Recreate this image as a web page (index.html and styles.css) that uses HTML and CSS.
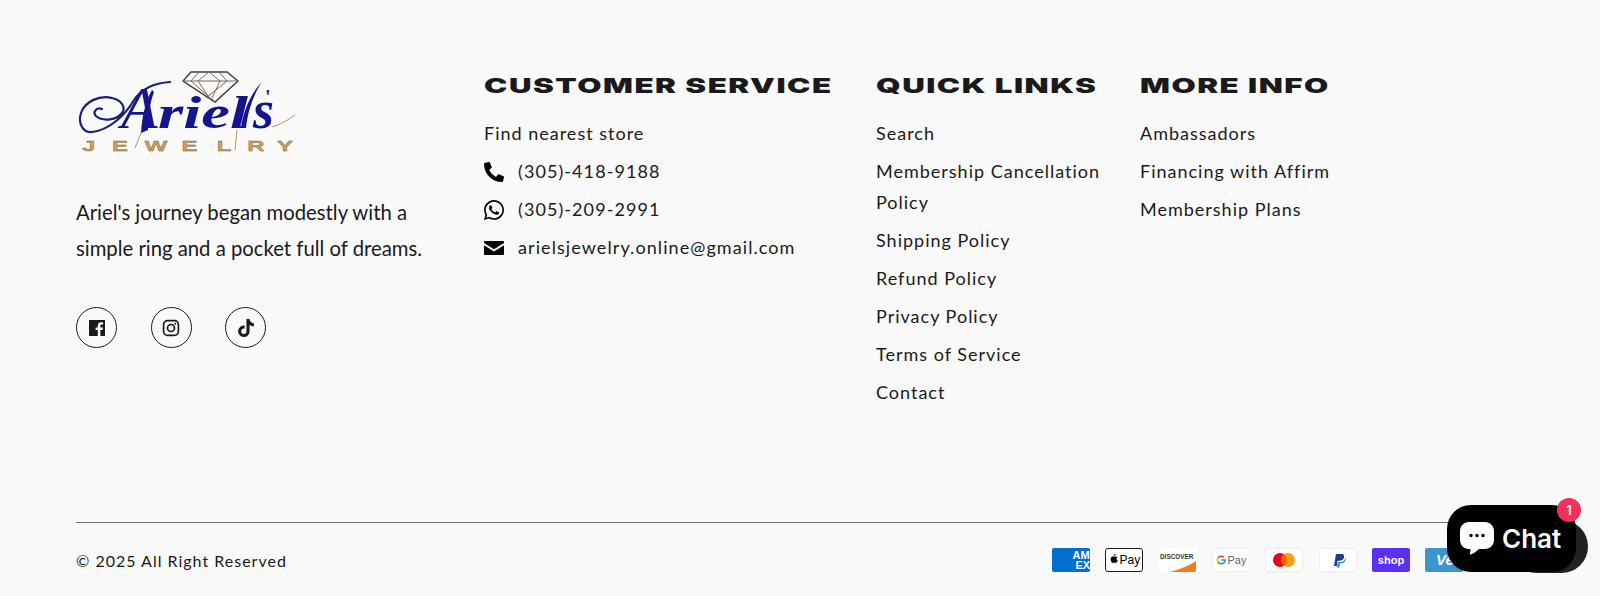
FILE: index.html
```html
<!DOCTYPE html>
<html lang="en">
  <head>
    <meta charset="UTF-8" />
    <meta name="viewport" content="width=device-width, initial-scale=1.0" />
    <title>Ariel's Jewelry Footer</title>
    <link rel="stylesheet" href="styles.css">
  </head>
  <body>
    <footer class="footer">
      <div class="footer-top">
        <div class="col-brand">
          <svg class="logo" width="220" height="90" viewBox="0 0 220 90" role="img" aria-label="Ariel's Jewelry">
            <!-- diamond -->
            <g fill="none" stroke="#3e3a44" stroke-width="1.4">
              <path d="M115 4H151L162 13L139 34L107 13Z"/>
              <path d="M107 13H162M123 4L115 13L139 34M143 4L151 13L130 30M133 4L122 13L134 31M133 4L144 13L136 30" stroke="#7d6a52" stroke-width="1"/>
            </g>
            <!-- swash of the A -->
            <path fill="none" stroke="#1c1f7a" stroke-width="2.2" stroke-linecap="round" d="M94 14C78 15 66 20 58 32C50 46 34 62 16 64C6 65 2 54 5 45C9 33 24 27 36 30C46 32 50 40 46 45C41 52 27 54 20 48C16 44 21 39 26 41"/>
            <path fill="#14148c" d="M76 22C70 32 66 48 65 65L72 62C72 48 74 34 78 24Z"/>
            <path fill="#14148c" d="M186 14C180 22 172 40 170 60L165 60C167 42 176 24 186 14Z"/>
            <g fill="none" stroke="#b9935e" stroke-width="1">
              <path d="M65 65L59 80"/>
              <path d="M161 62L159 82"/>
              <path d="M196 59C204 57 212 52 219 47"/>
            </g>
            <text class="logo-a" x="45" y="60">A</text>
            <text class="logo-script" x="82" y="60" textLength="90" lengthAdjust="spacingAndGlyphs">riel</text>
            <text class="logo-script"><tspan class="logo-apos" x="189" y="36">'</tspan><tspan class="logo-s" x="177" y="60">s</tspan></text>
            <text class="logo-sub" transform="scale(1.6 1)" x="3.750 22.500 43 66 88 107 125.600" y="83">JEWELRY</text>
          </svg>
          <p class="about">Ariel's journey began modestly with a<br>simple ring and a pocket full of dreams.</p>
          <ul class="socials">
            <li class="social">
              <svg width="18" height="18" viewBox="0 0 18 18"><path fill="#1a1a1a" d="M1 1H17V17H12.4V10.9H14.6L15 8.4H12.4V6.9C12.4 6.1 12.8 5.6 13.8 5.6H15.1V3.4C14.6 3.3 13.9 3.2 13.1 3.2C11.1 3.2 9.8 4.4 9.8 6.6V8.4H7.6V10.9H9.8V17H1Z"/></svg>
            </li>
            <li class="social">
              <svg width="18" height="18" viewBox="0 0 18 18" fill="none" stroke="#1a1a1a"><rect x="1.6" y="1.6" width="14.8" height="14.8" rx="4" stroke-width="1.7"/><circle cx="9" cy="9" r="3.5" stroke-width="1.7"/><circle cx="13.3" cy="4.7" r="1" fill="#1a1a1a" stroke="none"/></svg>
            </li>
            <li class="social">
              <svg width="18" height="18" viewBox="0 0 448 512"><path fill="#1a1a1a" d="M448 209.91a210.06 210.06 0 0 1-122.77-39.25V349.38A162.55 162.55 0 1 1 185 188.31V278.2a74.62 74.62 0 1 0 52.23 71.18V0l88 0a121.18 121.18 0 0 0 1.86 22.17h0A122.18 122.18 0 0 0 381 102.39a121.43 121.43 0 0 0 67 20.14Z"/></svg>
            </li>
          </ul>
        </div>

        <div class="col col-service">
          <h2 class="col-title">Customer Service</h2>
          <ul class="links">
            <li>Find nearest store</li>
            <li class="contact">
              <svg width="20" height="20" viewBox="0 0 512 512"><path d="M497.39 361.8l-112-48a24 24 0 0 0-28 6.9l-49.6 60.6A370.66 370.66 0 0 1 130.6 204.11l60.6-49.6a23.94 23.94 0 0 0 6.9-28l-48-112A24.16 24.16 0 0 0 122.6.61l-104 24A24 24 0 0 0 0 48c0 256.5 207.9 464 464 464a24 24 0 0 0 23.4-18.6l24-104a24.29 24.29 0 0 0-14.01-27.6z"/></svg>
              (305)-418-9188
            </li>
            <li class="contact">
              <svg width="20" height="20" viewBox="0 32 448 448"><path d="M380.9 97.1C339 55.1 283.2 32 223.9 32c-122.4 0-222 99.6-222 222 0 39.1 10.2 77.3 29.6 111L0 480l117.7-30.9c32.4 17.7 68.9 27 106.1 27h.1c122.3 0 224.1-99.6 224.1-222 0-59.3-25.2-115-67.1-157zm-157 341.6c-33.2 0-65.7-8.9-94-25.7l-6.7-4-69.8 18.3L72 359.2l-4.4-7c-18.5-29.4-28.2-63.3-28.2-98.2 0-101.7 82.8-184.5 184.6-184.5 49.3 0 95.6 19.2 130.4 54.1 34.8 34.9 56.2 81.2 56.1 130.5 0 101.8-84.9 184.6-186.6 184.6zm101.2-138.2c-5.5-2.8-32.8-16.2-37.9-18-5.1-1.9-8.8-2.8-12.5 2.8-3.7 5.6-14.3 18-17.6 21.8-3.2 3.7-6.5 4.2-12 1.4-32.6-16.3-54-29.1-75.5-66-5.7-9.8 5.7-9.1 16.3-30.3 1.8-3.7.9-6.9-.5-9.7-1.4-2.8-12.5-30.1-17.1-41.2-4.5-10.8-9.1-9.3-12.5-9.5-3.2-.2-6.9-.2-10.6-.2-3.7 0-9.7 1.4-14.8 6.9-5.1 5.6-19.4 19-19.4 46.3 0 27.3 19.9 53.7 22.6 57.4 2.8 3.7 39.1 59.7 94.8 83.8 35.2 15.2 49 16.5 66.6 13.9 10.7-1.6 32.8-13.4 37.4-26.4 4.6-13 4.6-24.1 3.2-26.4-1.3-2.5-5-3.9-10.5-6.6z"/></svg>
              (305)-209-2991
            </li>
            <li class="contact">
              <svg width="20" height="20" viewBox="0 0 20 20"><path d="M1 3H19C19.6 3 20 3.4 20 4V5L10 11.2L0 5V4C0 3.4 .4 3 1 3ZM0 7.2L10 13.4L20 7.2V16C20 16.6 19.6 17 19 17H1C.4 17 0 16.6 0 16Z"/></svg>
              arielsjewelry.online@gmail.com
            </li>
          </ul>
        </div>

        <div class="col col-quick">
          <h2 class="col-title">Quick Links</h2>
          <ul class="links">
            <li>Search</li>
            <li>Membership Cancellation Policy</li>
            <li>Shipping Policy</li>
            <li>Refund Policy</li>
            <li>Privacy Policy</li>
            <li>Terms of Service</li>
            <li>Contact</li>
          </ul>
        </div>

        <div class="col">
          <h2 class="col-title">More Info</h2>
          <ul class="links">
            <li>Ambassadors</li>
            <li>Financing with Affirm</li>
            <li>Membership Plans</li>
          </ul>
        </div>
      </div>

      <div class="footer-bottom">
        <span class="copyright">© 2025 All Right Reserved</span>
        <ul class="payments">
          <li>
            <svg class="pay" viewBox="0 0 38 24"><rect width="38" height="24" rx="2" fill="#016fd0"/><text class="pay-amex" x="20.500" y="11">AM</text><text class="pay-amex" x="23.500" y="20.500">EX</text></svg>
          </li>
          <li>
            <svg class="pay" viewBox="0 0 38 24"><rect x=".5" y=".5" width="37" height="23" rx="2.5" fill="#fff" stroke="#1a1a1a"/><path fill="#000" d="M9 8.7c.6 0 1.1-.3 1.7-.3.7 0 1.3.3 1.7.9-1.3.8-1.1 2.7.3 3.2-.3 1-1 2.4-1.9 2.4-.6 0-.9-.4-1.5-.4s-.9.4-1.5.4c-1.1 0-2.2-2.1-2.2-3.7 0-1.7 1-2.6 2.1-2.6.6 0 1.2.1 1.3.1zM10.7 6c.1.9-.8 2-1.8 1.9-.1-1 .8-1.9 1.8-1.9z"/><text class="pay-label" x="14.5" y="16">Pay</text></svg>
          </li>
          <li>
            <svg class="pay" viewBox="0 0 38 24"><rect width="38" height="24" rx="2" fill="#fff"/><path fill="#ee7e23" d="M11 24C22 21 31 17 37 13V22C37 23 36 24 35 24Z"/><text class="pay-discover" x="1" y="11">DISCOVER</text></svg>
          </li>
          <li>
            <svg class="pay" viewBox="0 0 38 24"><rect x=".5" y=".5" width="37" height="23" rx="2" fill="#fff" stroke="#eeeeee"/>
              <g fill="none" stroke-width="1.700">
                <path stroke="#ea4335" d="M12 9.200A4.200 4.200 0 0 0 5.900 10"/>
                <path stroke="#fbbc05" d="M5.900 10A4.200 4.200 0 0 0 5.900 14"/>
                <path stroke="#34a853" d="M5.900 14A4.200 4.200 0 0 0 12 14.800"/>
                <path stroke="#4285f4" d="M12 14.800A4.200 4.200 0 0 0 13.200 12H9.500"/>
              </g>
              <text class="pay-gpay" x="15.5" y="16">Pay</text></svg>
          </li>
          <li>
            <svg class="pay" viewBox="0 0 38 24"><rect x=".5" y=".5" width="37" height="23" rx="2" fill="#fff" stroke="#eeeeee"/><circle cx="15" cy="12" r="7" fill="#eb001b"/><circle cx="23" cy="12" r="7" fill="#f79e1b"/><path fill="#ff5f00" d="M19 6.3a7 7 0 0 1 0 11.4a7 7 0 0 1 0-11.4z"/></svg>
          </li>
          <li>
            <svg class="pay" viewBox="0 0 38 24"><rect x=".5" y=".5" width="37" height="23" rx="2" fill="#fff" stroke="#eeeeee"/><path fill="#253b80" d="M15 18L17 6H22C25 6 25.5 8 25 9.5C24.3 12 22.5 12.7 20 12.7H18.5L17.7 18Z"/><path fill="#179bd7" d="M17.5 19.5L19 14H21C24 14 26 12.5 26.5 9.5C27.5 11 26.5 15 22.5 15.2H21L20.3 19.5Z"/></svg>
          </li>
          <li>
            <svg class="pay" viewBox="0 0 38 24"><rect width="38" height="24" rx="2" fill="#5a31f4"/><text class="pay-shop" x="19" y="16">shop</text></svg>
          </li>
          <li>
            <svg class="pay" viewBox="0 0 38 24"><rect width="38" height="24" rx="2" fill="#3d95ce"/><text class="pay-venmo" x="11" y="17">Ve</text></svg>
          </li>
          <li>
            <svg class="pay" viewBox="0 0 38 24"><rect x=".5" y=".5" width="37" height="23" rx="2" fill="#fff" stroke="#eeeeee"/></svg>
          </li>
        </ul>
      </div>
    </footer>

    <!-- chat launcher sits over the page corner -->
    <div class="chat-shadow"></div>
    <div class="chat">
      <svg width="34" height="33" viewBox="0 0 34 33"><path fill="#fff" d="M9 0H25C30 0 34 4 34 9V18C34 23 30 27 25 27H19C16.500 29.500 13 32 10.500 32.500C10 32.600 9.600 32.200 9.800 31.700C10.300 30.500 10.500 29 10.500 27H9C4 27 0 23 0 18V9C0 4 4 0 9 0Z"/><circle cx="11" cy="13.500" r="1.700"/><circle cx="17" cy="13.500" r="1.700"/><circle cx="23" cy="13.500" r="1.700"/></svg>
      <span class="chat-label">Chat</span>
    </div>
    <div class="chat-badge">1</div>
  </body>
</html>
```

FILE: styles.css
```css
body {
  margin: 0;
  padding: 0;
  background: #f9f9f9;
  color: #1a1a1a;
  font-family: Lato, "Noto Sans", sans-serif;
  overflow: hidden;
}

ul {
  list-style: none;
  margin: 0;
  padding: 0;
}

.footer {
  height: 596px;
  padding: 68px 76px 0;
  box-sizing: border-box;
}

.footer-top {
  display: flex;
  height: 454px;
}

.col-brand {
  width: 408px;
}

.col-service {
  width: 392px;
}

.col-quick {
  width: 264px;
}

.logo {
  display: block;
}

.logo-a {
  font-family: "Liberation Serif", serif;
  font-style: italic;
  font-size: 60px;
  fill: #14148c;
}

.logo-script {
  font-family: "Liberation Serif", serif;
  font-style: italic;
  font-weight: 700;
  font-size: 46px;
  fill: #14148c;
}

.logo-apos {
  font-style: normal;
  font-size: 20px;
}

.logo-s {
  font-size: 54px;
}

.logo-sub {
  font-family: "Liberation Sans", sans-serif;
  font-weight: 700;
  font-size: 15px;
  fill: #cf9f5c;
  stroke: #6b5a42;
  stroke-width: 0.3px;
}

.about {
  margin: 37px 0 0;
  font-size: 20.3px;
  line-height: 35.5px;
}

.socials {
  display: flex;
  gap: 33.5px;
  margin-top: 41px;
}

.social {
  width: 41px;
  height: 41px;
  border: 1.3px solid #1a1a1a;
  border-radius: 50%;
  box-sizing: border-box;
  display: flex;
  align-items: center;
  justify-content: center;
}

.col-title {
  margin: 1px 0 15px;
  font-family: Inter, sans-serif;
  font-weight: 900;
  font-size: 20.5px;
  line-height: 34px;
  text-transform: uppercase;
  letter-spacing: 1px;
  white-space: nowrap;
  transform: scaleX(1.525);
  transform-origin: left center;
}

.links {
  display: flex;
  flex-direction: column;
  gap: 7px;
  font-size: 18px;
  line-height: 31px;
  letter-spacing: 1px;
  max-width: 240px;
}

.col-service .links {
  max-width: none;
}

.contact {
  display: flex;
  align-items: center;
  gap: 14px;
  letter-spacing: 1.08px;
}

.footer-bottom {
  display: flex;
  align-items: center;
  justify-content: space-between;
  border-top: 1px solid #6f6f6f;
  height: 74px;
}

.copyright {
  font-size: 16px;
  letter-spacing: 1px;
}

.payments {
  display: flex;
  gap: 15.3px;
  margin-right: 7.5px;
}

.payments li {
  display: flex;
}

.pay {
  width: 38px;
  height: 24px;
}

.pay-amex {
  font-family: "Liberation Sans", sans-serif;
  font-weight: 700;
  font-size: 11px;
  fill: #fff;
}

.pay-label {
  font-family: "Liberation Sans", sans-serif;
  font-size: 12px;
  fill: #000;
}

.pay-discover {
  font-family: "Liberation Sans", sans-serif;
  font-weight: 700;
  font-size: 6.4px;
  fill: #333;
}

.pay-gpay {
  font-family: "Liberation Sans", sans-serif;
  font-size: 11px;
  fill: #5f6368;
}

.pay-shop {
  font-family: "Liberation Sans", sans-serif;
  font-weight: 700;
  font-size: 11px;
  fill: #fff;
  text-anchor: middle;
}

.pay-venmo {
  font-family: "Liberation Sans", sans-serif;
  font-weight: 700;
  font-style: italic;
  font-size: 15px;
  fill: #fff;
}

.chat-shadow {
  position: absolute;
  left: 1510px;
  top: 520px;
  width: 78px;
  height: 53px;
  border-radius: 27px;
  background: #222;
}

.chat {
  position: absolute;
  left: 1447px;
  top: 505px;
  width: 129px;
  height: 67px;
  box-sizing: border-box;
  padding-left: 13px;
  background: #000;
  border-radius: 24px;
  display: flex;
  align-items: center;
  gap: 8px;
}

.chat-label {
  color: #fff;
  font-family: Inter, sans-serif;
  font-weight: 600;
  font-size: 26px;
}

.chat-badge {
  position: absolute;
  left: 1557px;
  top: 498px;
  width: 24px;
  height: 24px;
  border-radius: 50%;
  background: #f0325a;
  color: #fff;
  font-family: Inter, sans-serif;
  font-weight: 600;
  font-size: 13px;
  line-height: 24px;
  text-align: center;
}
```
